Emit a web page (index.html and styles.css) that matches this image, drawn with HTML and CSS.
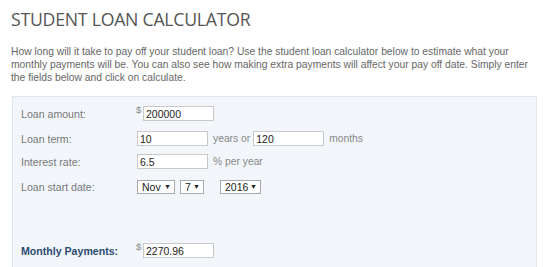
FILE: index.html
```html
<!DOCTYPE html>
<html>
<head>
<meta charset="utf-8">
<link rel="stylesheet" href="styles.css">
</head>
<body>
<div class="page">
  <h1 class="title">STUDENT LOAN CALCULATOR</h1>
  <p class="intro">How long will it take to pay off your student loan? Use the student loan calculator below to estimate what your monthly payments will be. You can also see how making extra payments will affect your pay off date. Simply enter the fields below and click on calculate.</p>
  <div class="panel">
    <div class="row r1">
      <span class="label">Loan amount:</span>
      <span class="cur">$</span><input class="field" type="text" value="200000">
    </div>
    <div class="row r2">
      <span class="label">Loan term:</span>
      <input class="field f-ind" type="text" value="10">
      <span class="unit">years or</span>
      <input class="field" type="text" value="120">
      <span class="unit">months</span>
    </div>
    <div class="row r3">
      <span class="label">Interest rate:</span>
      <input class="field f-ind" type="text" value="6.5">
      <span class="unit">% per year</span>
    </div>
    <div class="row r4">
      <span class="label">Loan start date:</span>
      <span class="sel s-mon"><select><option>Nov</option></select><span class="arrow">▼</span></span>
      <span class="sel s-day"><select><option>7</option></select><span class="arrow">▼</span></span>
      <span class="sel s-yr"><select><option>2016</option></select><span class="arrow">▼</span></span>
    </div>
    <div class="row r5">
      <span class="label strong">Monthly Payments:</span>
      <span class="cur">$</span><input class="field" type="text" value="2270.96">
    </div>
  </div>
</div>
</body>
</html>
```
FILE: styles.css
```css
html, body {
  margin: 0;
  padding: 0;
  background: #ffffff;
  overflow: hidden;
}
.page {
  padding: 0 13px 0 11px;
  font-family: "Liberation Sans", Arial, sans-serif;
}
.title {
  margin: 0;
  padding-top: 8px;
  font-family: "Open Sans", "DejaVu Sans", sans-serif;
  font-weight: 400;
  font-size: 17.7px;
  line-height: 22px;
  color: #555555;
  letter-spacing: -0.25px;
}
.intro {
  margin: 15px 0 0 0;
  font-size: 10.3px;
  line-height: 13px;
  color: #666666;
  width: 520px;
}
.panel {
  margin-top: 12px;
  margin-left: 1px;
  background: #f2f6fb;
  border: 1px solid #e1e7ef;
  border-bottom: none;
  height: 172px;
  padding: 9px 0 0 8px;
  box-sizing: border-box;
}
.row {
  display: flex;
  align-items: center;
  font-size: 10.3px;
  color: #777777;
  height: 15px;
}
.r2 { margin-top: 10px; }
.r3 { margin-top: 8px; }
.r4 { margin-top: 10px; }
.r5 { margin-top: 49px; }
.label {
  width: 115px;
  flex: none;
  color: #777777;
  font-size: 10.6px;
}
.label.strong {
  font-weight: 700;
  color: #2b4b72;
}
.cur {
  width: 7px;
  font-size: 9.5px;
  color: #888888;
  align-self: flex-start;
  margin-top: -2px;
}
.field {
  box-sizing: border-box;
  width: 71px;
  height: 15px;
  border: 1px solid #c9c9c9;
  background: #ffffff;
  font-family: "Liberation Sans", Arial, sans-serif;
  font-size: 10.5px;
  color: #222222;
  padding: 0 2px;
  margin: 0;
  outline: none;
}
.f-ind { margin-left: 1px; }
.unit {
  margin: 0 3px 0 5px;
  color: #888888;
}
.sel {
  position: relative;
  display: inline-block;
  height: 14px;
  margin-right: 5px;
}
.sel select {
  -webkit-appearance: none;
  appearance: none;
  box-sizing: border-box;
  height: 14px;
  border: 1px solid #a9a9a9;
  background: #ffffff;
  font-family: "Liberation Sans", Arial, sans-serif;
  font-size: 10.5px;
  color: #222222;
  padding: 0 0 0 4px;
  margin: 0;
  line-height: 12px;
  outline: none;
}
.s-mon { margin-left: 1px; }
.s-mon select { width: 38px; }
.s-day select { width: 24px; }
.s-yr { margin-left: 11px; }
.s-yr select { width: 41px; }
.arrow {
  position: absolute;
  right: 4px;
  top: 2px;
  font-size: 7px;
  line-height: 10px;
  color: #222222;
  pointer-events: none;
}
```
